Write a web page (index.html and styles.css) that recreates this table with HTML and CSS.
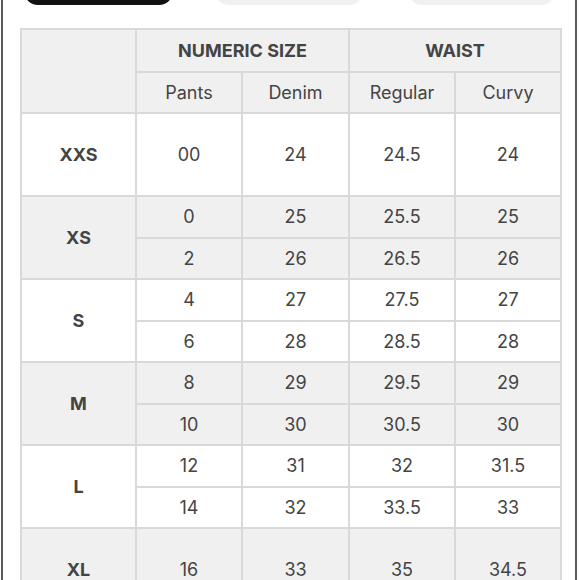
FILE: index.html
```html
<!DOCTYPE html>
<html>
<head>
<meta charset="utf-8">
<link rel="stylesheet" href="styles.css">
</head>
<body>
<div class="frame">
  <div class="tabs">
    <div class="tab tab-active"></div>
    <div class="tab tab-2"></div>
    <div class="tab tab-3"></div>
  </div>
  <table class="chart">
    <colgroup>
      <col class="c-size">
      <col class="c-num">
      <col class="c-num2">
      <col class="c-num">
      <col class="c-num">
    </colgroup>
    <thead>
      <tr class="h1">
        <th rowspan="2" class="corner"></th>
        <th colspan="2" class="group">NUMERIC SIZE</th>
        <th colspan="2" class="group">WAIST</th>
      </tr>
      <tr class="h2">
        <th class="sub">Pants</th>
        <th class="sub">Denim</th>
        <th class="sub">Regular</th>
        <th class="sub">Curvy</th>
      </tr>
    </thead>
    <tbody>
      <tr class="single">
        <th class="size">XXS</th><td>00</td><td>24</td><td>24.5</td><td>24</td>
      </tr>
      <tr class="half shade">
        <th rowspan="2" class="size">XS</th><td>0</td><td>25</td><td>25.5</td><td>25</td>
      </tr>
      <tr class="half shade">
        <td>2</td><td>26</td><td>26.5</td><td>26</td>
      </tr>
      <tr class="half">
        <th rowspan="2" class="size">S</th><td>4</td><td>27</td><td>27.5</td><td>27</td>
      </tr>
      <tr class="half">
        <td>6</td><td>28</td><td>28.5</td><td>28</td>
      </tr>
      <tr class="half shade">
        <th rowspan="2" class="size">M</th><td>8</td><td>29</td><td>29.5</td><td>29</td>
      </tr>
      <tr class="half shade">
        <td>10</td><td>30</td><td>30.5</td><td>30</td>
      </tr>
      <tr class="half">
        <th rowspan="2" class="size">L</th><td>12</td><td>31</td><td>32</td><td>31.5</td>
      </tr>
      <tr class="half">
        <td>14</td><td>32</td><td>33.5</td><td>33</td>
      </tr>
      <tr class="single shade">
        <th class="size">XL</th><td>16</td><td>33</td><td>35</td><td>34.5</td>
      </tr>
    </tbody>
  </table>
</div>
</body>
</html>
```

FILE: styles.css
```css
html, body {
  margin: 0;
  padding: 0;
  background: #ffffff;
  overflow: hidden;
}

.frame {
  margin-left: 1px;
  width: 572px;
  height: 580px;
  border-left: 2px solid #5a5a5a;
  border-right: 2px solid #5a5a5a;
  background: #ffffff;
  overflow: hidden;
  font-family: "Inter", "Open Sans", sans-serif;
  color: #444444;
}

.tabs {
  display: flex;
  margin-top: -31px;
  padding-left: 21px;
  height: 36px;
}

.tab {
  height: 36px;
  border-radius: 14px;
  background: #f0f0f0;
}

.tab-active {
  width: 149px;
  background: #111111;
}

.tab-2 {
  width: 148px;
  margin-left: 42px;
}

.tab-3 {
  width: 147px;
  margin-left: 45px;
}

.chart {
  margin-top: 23px;
  margin-left: 17px;
  width: 541px;
  table-layout: fixed;
  border-collapse: collapse;
  font-size: 18px;
}

.c-size { width: 115px; }
.c-num { width: 106px; }
.c-num2 { width: 107px; }

.chart th,
.chart td {
  border: 2px solid #d9d9d9;
  text-align: center;
  vertical-align: middle;
  padding: 0;
  font-weight: 400;
}

.chart thead th {
  background: #f0f0f0;
}

.h1 { height: 43px; }
.h2 { height: 41px; }

.group {
  font-weight: 700 !important;
  font-size: 18px;
}

.sub {
  font-weight: 400;
}

.single { height: 83px; }
.half { height: 41.5px; }

.shade th,
.shade td {
  background: #f0f0f0;
}

.size {
  font-weight: 700 !important;
}
```
